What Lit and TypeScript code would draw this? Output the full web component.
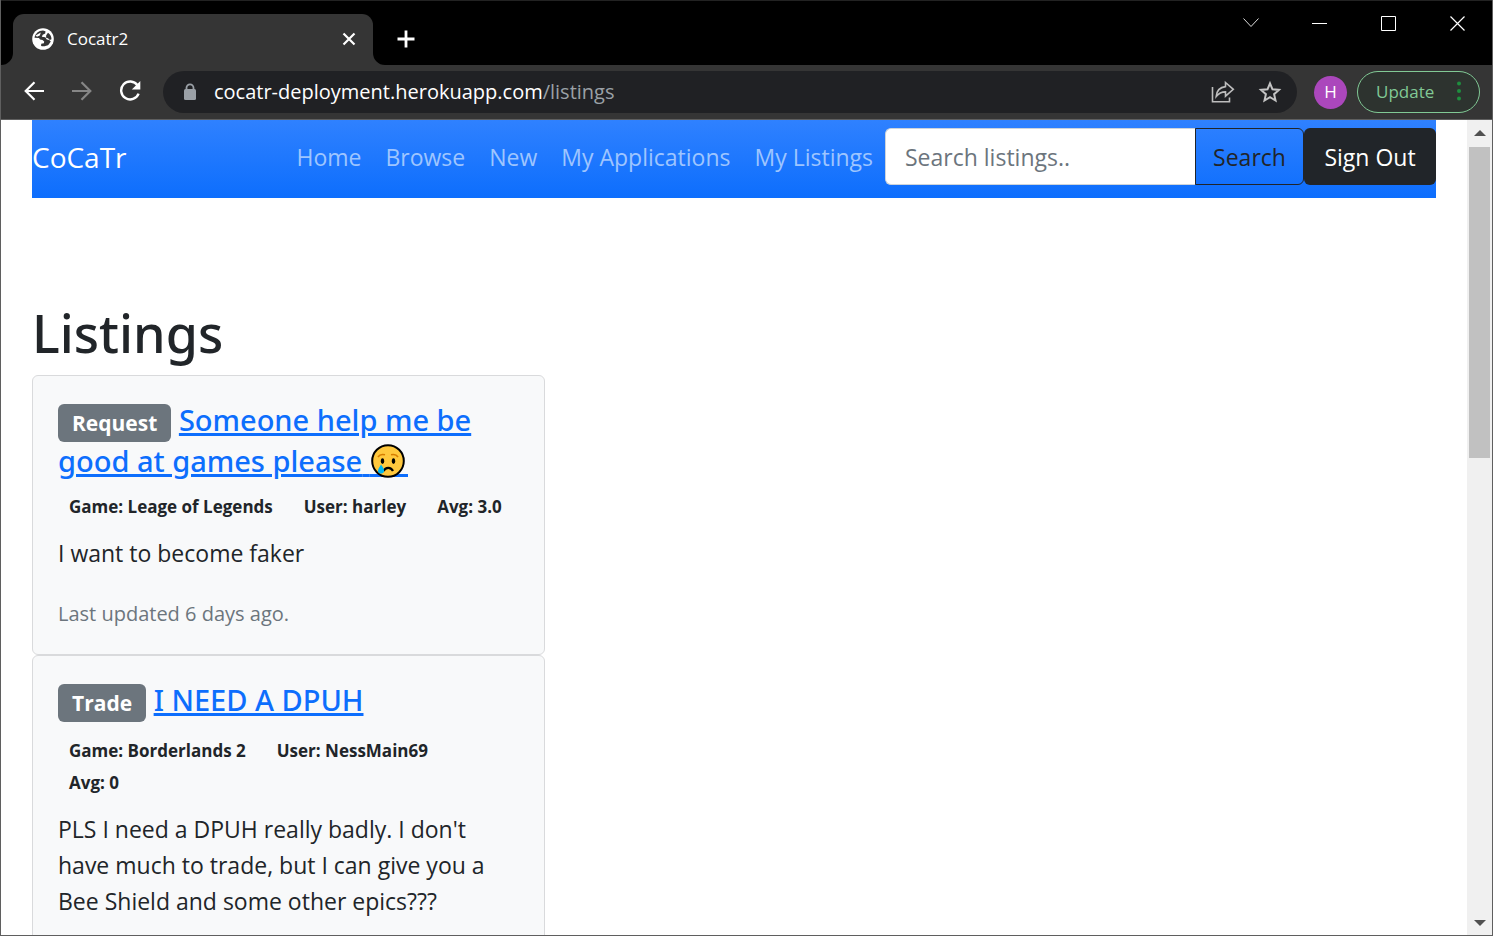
import { LitElement, html, css, svg } from "lit";
import { customElement } from "lit/decorators.js";

interface Listing {
  kind: string;
  title: string;
  sad?: boolean;
  tags: string[];
  body: string;
  updated?: string;
}

const LISTINGS: Listing[] = [
  {
    kind: "Request",
    title: "Someone help me be good at games please",
    sad: true,
    tags: ["Game: Leage of Legends", "User: harley", "Avg: 3.0"],
    body: "I want to become faker",
    updated: "Last updated 6 days ago.",
  },
  {
    kind: "Trade",
    title: "I NEED A DPUH",
    tags: ["Game: Borderlands 2", "User: NessMain69", "Avg: 0"],
    body: "PLS I need a DPUH really badly. I don't have much to trade, but I can give you a Bee Shield and some other epics???",
  },
];

const NAV = ["Home", "Browse", "New", "My Applications", "My Listings"];

const icon = (w: number, h: number, body: unknown) =>
  html`<svg width=${w} height=${h} viewBox="0 0 ${w} ${h}" fill="none" aria-hidden="true">${body}</svg>`;

const base = css`
  *, *::before, *::after { box-sizing: border-box; }
  svg { display: block; flex: none; }
  button { font: inherit; border: 0; background: none; padding: 0; margin: 0; cursor: pointer; }
`;

@customElement("browser-chrome")
export class BrowserChrome extends LitElement {
  static styles = [base, css`
    :host { display: block; color: #fff; font-size: 17px; }
    .strip { display: flex; align-items: flex-end; background: #000; height: 65px; border-top: 1px solid #222; }
    .tab { display: flex; align-items: center; width: 360px; height: 51px; padding: 0 15px 2px 19px; gap: 13px; background: #353535; border-radius: 11px 11px 0 0; }
    .title { flex: 1; line-height: 24px; }
    .flare { width: 12px; height: 12px; }
    .icon { display: flex; align-items: center; justify-content: center; }
    .plus { width: 42px; height: 51px; padding-bottom: 2px; }
    .controls { display: flex; align-self: flex-start; margin-left: auto; }
    .control { width: 69px; height: 44px; }
    .bar { display: flex; align-items: center; height: 55px; padding: 0 12px 0 9px; background: #353535; border-bottom: 1px solid #5f5f5f; }
    .nav { width: 48px; height: 42px; padding-bottom: 2px; }
    .omni { display: flex; align-items: center; flex: 1; height: 42px; margin: 0 17px 0 9px; padding: 0 15px 0 20px; gap: 17px; background: #202124; border-radius: 21px; }
    .url { flex: 1; font-size: 20px; line-height: 28px; white-space: nowrap; }
    .path { color: #9aa0a6; }
    .actions { display: flex; gap: 23px; }
    .avatar { width: 33px; height: 33px; border-radius: 50%; background: #ab47bc; color: #fff; margin-right: 10px; padding-bottom: 2px; }
    .update { display: flex; align-items: center; justify-content: space-between; width: 123px; height: 42px; padding: 0 18px 2px; border: 1px solid #81c995; border-radius: 21px; background: #2d332f; color: #81c995; }
  `];

  render() {
    return html`
      <div class="strip">
        <div class="flare">${icon(12, 12, svg`<path d="M12 0v12H0A12 12 0 0 0 12 0z" fill="#353535"/>`)}</div>
        <div class="tab">
          ${icon(22, 22, svg`<circle cx="11" cy="11" r="10.800" fill="#fff"/><path d="M2.500 9.800C3.300 5.600 6.600 2.800 11 2.600l2.500.6-.3 2.200-2.500 1.400-.9 1.900 3.500.6 1.500 2.300 2.400.4 1.600 1.600-2.300 3.200c-2.200 1.400-5 1.900-7.400 1.200l.1-2.200 2.700-.6.300-1.600-1.700-1.700-2.500-.3-1-1.600z" fill="#353535"/><path d="M3.500 7.500 8.800 4.500l-1 3L5 8.800z" fill="#fff"/><path d="M16 4.800c2.200 1.500 3.500 3.700 3.500 6.500l-1.700.6-1.800-1.700-1.900-.4.100-2.600z" fill="#353535"/>`)}
          <div class="title">Cocatr2</div>
          <button class="icon" aria-label="Close tab">${icon(18, 18, svg`<path d="M3.500 3.500l11 11M14.500 3.500l-11 11" stroke="#fff" stroke-width="2.200"/>`)}</button>
        </div>
        <div class="flare">${icon(12, 12, svg`<path d="M0 0v12h12A12 12 0 0 1 0 0z" fill="#353535"/>`)}</div>
        <button class="icon plus" aria-label="New tab">${icon(18, 18, svg`<path d="M9 0.500v17M0.500 9h17" stroke="#fff" stroke-width="2.800"/>`)}</button>
        <div class="controls">
          <button class="icon control" aria-label="Search tabs">${icon(16, 10, svg`<path d="M0.500 0.500 8 8.500l7.500-8" stroke="#ddd"/>`)}</button>
          <button class="icon control" aria-label="Minimize">${icon(15, 1, svg`<path d="M0 .5h15" stroke="#fff"/>`)}</button>
          <button class="icon control" aria-label="Maximize">${icon(15, 15, svg`<path d="M.5.5h14v14H.5z" stroke="#fff"/>`)}</button>
          <button class="icon control" aria-label="Close">${icon(15, 15, svg`<path d="M.5.5l14 14M14.500.500l-14 14" stroke="#fff" stroke-width="1.200"/>`)}</button>
        </div>
      </div>
      <div class="bar">
        <button class="icon nav" aria-label="Back">${icon(20, 20, svg`<path d="M20 10H2M10.500 1.200 1.700 10l8.800 8.800" stroke="#fff" stroke-width="2.200"/>`)}</button>
        <button class="icon nav" aria-label="Forward">${icon(20, 20, svg`<path d="M0 10h18M9.500 1.200l8.800 8.800-8.800 8.800" stroke="#868686" stroke-width="2.200"/>`)}</button>
        <button class="icon nav" aria-label="Reload">${icon(22, 22, svg`<path d="M18.500 5.200A9 9 0 1 0 19.600 13.600" stroke="#fff" stroke-width="2.400"/><path d="M21.300 1v8.500h-8.500z" fill="#fff"/>`)}</button>
        <div class="omni">
          ${icon(14, 18, svg`<path d="M3.500 7V4.800a3.500 3.500 0 0 1 7 0V7" stroke="#9aa0a6" stroke-width="1.800"/><rect x="1" y="6" width="12" height="11" rx="1.500" fill="#9aa0a6"/>`)}
          <div class="url">cocatr-deployment.herokuapp.com<span class="path">/listings</span></div>
          <div class="actions">
            <button class="icon" aria-label="Share">${icon(25, 24, svg`<path d="M2.500 7v14.700h17V17.500" stroke="#bdbdbd" stroke-width="1.600"/><path d="M15.500 2.500l7.800 6.800-7.800 6.900v-4.300c-4 0-6.800 1.400-9.300 4.600.4-5.200 3.600-9.300 9.300-9.900z" stroke="#bdbdbd" stroke-width="1.600"/>`)}</button>
            <button class="icon" aria-label="Bookmark">${icon(24, 24, svg`<path d="M12 3.300l2.500 6 6.500.6-4.900 4.300 1.400 6.300L12 17.200l-5.500 3.300 1.400-6.300L3 9.900l6.500-.6z" stroke="#c4c4c4" stroke-width="2"/>`)}</button>
          </div>
        </div>
        <button class="icon avatar" aria-label="Profile">H</button>
        <button class="update">Update ${icon(4, 20, svg`<circle cx="2" cy="2.500" r="2" fill="#1e8e3e"/><circle cx="2" cy="10" r="2" fill="#1e8e3e"/><circle cx="2" cy="17.500" r="2" fill="#1e8e3e"/>`)}</button>
      </div>
    `;
  }
}

@customElement("listing-card")
export class ListingCard extends LitElement {
  static properties = { item: { attribute: false } };
  declare item: Listing;

  static styles = [base, css`
    :host { display: block; }
    .card { padding: 25px; border: 1px solid #d9dadc; border-radius: 6px; background: #f8f9fa; }
    .heading { min-height: 43px; margin: 0 0 11px; font-family: "Noto Sans", "Open Sans", sans-serif; font-size: 29px; line-height: 38px; font-weight: 500; }
    .kind { display: inline-block; padding: 0 14px; border-radius: 6px; background: #6c757d; color: #fff; font-family: "Open Sans", sans-serif; font-size: 21px; line-height: 38px; font-weight: 700; }
    .link { color: #0d6efd; text-decoration: underline; text-decoration-thickness: 3px; text-underline-offset: 2px; }
    .sad { display: inline-block; width: 38px; height: 34px; vertical-align: -6px; }
    .tags { display: flex; flex-wrap: wrap; column-gap: 9px; }
    .tag { padding: 0 11px; font-size: 17px; line-height: 32px; font-weight: 700; white-space: nowrap; }
    .body { margin: 12px 0 28px; line-height: 36px; }
    .updated { display: block; color: #6c757d; font-size: 20px; line-height: 30px; }
  `];

  render() {
    const { kind, title, sad, tags, body, updated } = this.item;
    return html`
      <article class="card">
        <h5 class="heading">
          <span class="kind">${kind}</span>
          <a class="link" href="#">${title}${sad ? html` <svg class="sad" viewBox="0 0 38 34" role="img" aria-label="Crying face">
            <path d="M0 31.500h38" stroke="#0d6efd" stroke-width="3"/>
            <circle cx="18" cy="17" r="15.800" fill="#ffc83d" stroke="#000" stroke-width="2"/>
            <path d="M8 13c1.500-2.400 4-3 7-2.200M21 10.800c3-.8 5.500-.2 7 2.200" stroke="#d67d00" stroke-width="1.600" fill="none"/>
            <ellipse cx="12.500" cy="17.200" rx="1.700" ry="2.900"/><ellipse cx="23.500" cy="17.200" rx="1.700" ry="2.900"/>
            <path d="M13.500 27c2-4.300 7.500-4.300 9.500 0" stroke="#000" stroke-width="2.200" fill="none"/>
            <path d="M11 20.500c2 3 3.500 4.800 3 7-.6 2.800-5.300 2.800-6 0-.5-2.200 1.500-4 3-7z" fill="#00b5f0"/>
          </svg>` : ""}</a>
        </h5>
        <div class="tags">${tags.map((t) => html`<span class="tag">${t}</span>`)}</div>
        <p class="body">${body}</p>
        ${updated ? html`<small class="updated">${updated}</small>` : ""}
      </article>
    `;
  }
}

@customElement("app-root")
export class AppRoot extends LitElement {
  static styles = [base, css`
    :host { display: flex; flex-direction: column; height: 100vh; overflow: hidden; border: solid #5f5f5f; border-width: 0 1px 1px; box-sizing: border-box; background: #fff; color: #212529; font-family: "Open Sans", "Noto Sans", sans-serif; font-size: 23px; }
    .view { display: flex; flex: 1; min-height: 0; }
    .page { flex: 1; min-width: 0; overflow: hidden; padding: 0 31px; }
    .navbar { display: flex; align-items: center; padding: 8px 0 13px; background: linear-gradient(#2f81ff, #0d6efd); }
    .brand { margin-right: auto; color: #fff; font-size: 28px; line-height: 40px; text-decoration: none; }
    .links { display: flex; margin: 0; padding: 0; list-style: none; }
    .link { display: block; padding: 0 12px; color: #9ec5fe; line-height: 36px; text-decoration: none; white-space: nowrap; }
    .search { display: flex; }
    .field { width: 310px; height: 57px; padding: 0 19px; border: 1px solid #ced4da; border-right: 0; border-radius: 6px 0 0 6px; background: #fff; color: #212529; font: inherit; }
    .field::placeholder { color: #6c757d; opacity: 1; }
    .submit { width: 109px; height: 57px; border: 1px solid #212529; border-radius: 0 6px 6px 0; color: #212529; }
    .signout { width: 132px; height: 57px; border-radius: 6px; background: #212529; color: #fff; white-space: nowrap; }
    .heading { margin: 99px 0 6px; font-family: "Noto Sans", "Open Sans", sans-serif; font-size: 52px; line-height: 72px; font-weight: 500; }
    .list { width: 513px; }
    .scroll { display: flex; flex-direction: column; justify-content: space-between; align-items: center; width: 25px; padding: 10px 0 9px; background: #f0f0f0; }
    .thumb { width: 21px; height: 311px; margin: 11px 0 auto; background: #c1c1c1; }
  `];

  render() {
    return html`
      <browser-chrome></browser-chrome>
      <div class="view">
        <main class="page">
          <nav class="navbar">
            <a class="brand" href="#">CoCaTr</a>
            <ul class="links">${NAV.map((n) => html`<li><a class="link" href="#">${n}</a></li>`)}</ul>
            <form class="search">
              <input class="field" type="search" placeholder="Search listings.." aria-label="Search listings" />
              <button class="submit" type="button">Search</button>
            </form>
            <button class="signout">Sign Out</button>
          </nav>
          <h1 class="heading">Listings</h1>
          <section class="list">${LISTINGS.map((l) => html`<listing-card .item=${l}></listing-card>`)}</section>
        </main>
        <div class="scroll" aria-hidden="true">
          ${icon(12, 6, svg`<path d="M0 6l6-6 6 6z" fill="#505050"/>`)}
          <div class="thumb"></div>
          ${icon(12, 6, svg`<path d="M0 0l6 6 6-6z" fill="#505050"/>`)}
        </div>
      </div>
    `;
  }
}
